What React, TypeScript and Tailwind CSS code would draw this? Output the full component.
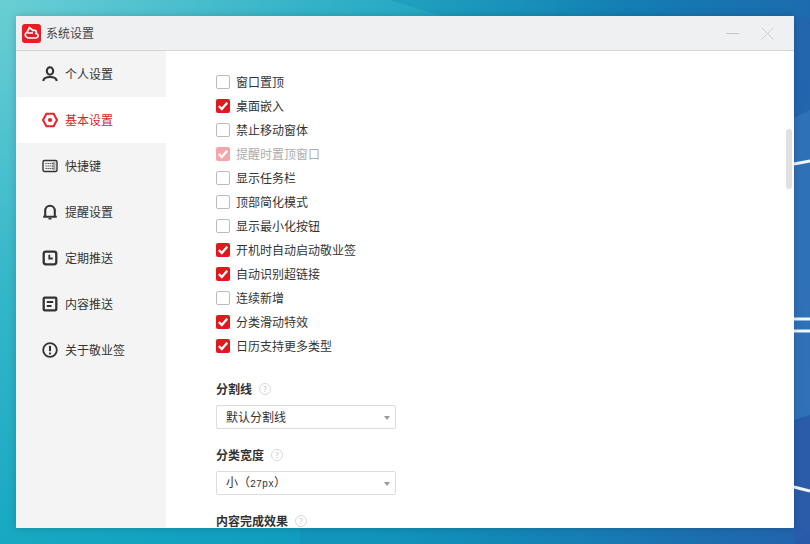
import React from "react";

const font = { fontFamily: '"Noto Sans CJK SC", "Liberation Sans", sans-serif' };

const checks: [string, "off" | "on" | "dim"][] = [
  ["窗口置顶", "off"],
  ["桌面嵌入", "on"],
  ["禁止移动窗体", "off"],
  ["提醒时置顶窗口", "dim"],
  ["显示任务栏", "off"],
  ["顶部简化模式", "off"],
  ["显示最小化按钮", "off"],
  ["开机时自动启动敬业签", "on"],
  ["自动识别超链接", "on"],
  ["连续新增", "off"],
  ["分类滑动特效", "on"],
  ["日历支持更多类型", "on"],
];

function Tick() {
  return (
    <svg width="14" height="14" viewBox="0 0 14 14" fill="none">
      <path d="M2.8 7 L5.8 10 L11.2 3.8" stroke="#fff" strokeWidth="2.4" />
    </svg>
  );
}

function Check({ label, state }: { label: string; state: "off" | "on" | "dim" }) {
  const box =
    state === "on"
      ? "bg-[#e8141c]"
      : state === "dim"
        ? "bg-[#f6a6aa]"
        : "border border-[#bcbcbc] bg-white";
  return (
    <div className="flex h-6 items-center gap-[6px]">
      <span className={`flex h-[14px] w-[14px] items-center justify-center rounded-[2px] ${box}`}>
        {state !== "off" && <Tick />}
      </span>
      <span className={`text-xs ${state === "dim" ? "text-[#adadad]" : "text-[#333]"}`}>{label}</span>
    </div>
  );
}

function Help() {
  return (
    <span className="flex h-3 w-3 items-center justify-center rounded-full border border-[#d8d8d8] text-[8px] leading-none text-[#c4c4c4]">
      ?
    </span>
  );
}

function Label({ text }: { text: string }) {
  return (
    <div className="flex h-4 items-center gap-[7px]">
      <span className="text-xs font-bold text-[#333]">{text}</span>
      <Help />
    </div>
  );
}

function Select({ children }: { children: React.ReactNode }) {
  return (
    <div className="mt-2 flex h-6 w-[180px] items-center justify-between rounded-[2px] border border-[#dcdcdc] bg-white pl-[9px] pr-[5px] text-xs text-[#333]">
      <span>{children}</span>
      <span className="mt-[1px] h-0 w-0 border-x-[3.5px] border-t-[4px] border-x-transparent border-t-[#999]" />
    </div>
  );
}

function Icon({ name, color }: { name: string; color: string }) {
  const s = { stroke: color, fill: "none", strokeWidth: 2.1 };
  return (
    <svg width="16" height="16" viewBox="0 0 16 16">
      {name === "user" && (
        <g {...s}>
          <ellipse cx="8" cy="5" rx="3.2" ry="3.7" />
          <path d="M1.2 15 C1.6 11.8 5 11 8 11 C11 11 14.4 11.8 14.8 15" />
        </g>
      )}
      {name === "hex" && (
        <g>
          <path d="M4.4 1.8 H11.6 L15 8 L11.6 14.2 H4.4 L1 8 Z" {...s} />
          <circle cx="8" cy="8" r="2.1" fill={color} />
        </g>
      )}
      {name === "kbd" && (
        <g>
          <rect x="1" y="2.5" width="14" height="11" rx="1.5" stroke={color} strokeWidth="1.4" fill="none" />
          <rect x="10.5" y="4" width="3" height="8" fill="#aaa" />
          <path d="M3.5 5.5 H12 M3.5 8 H12 M3.5 10.5 H12" stroke="#555" strokeWidth="1.2" strokeDasharray="1.4 0.6" />
        </g>
      )}
      {name === "bell" && (
        <g {...s}>
          <path d="M3.2 12.5 V7 C3.2 3.8 5.3 1.8 8 1.8 C10.7 1.8 12.8 3.8 12.8 7 V12.5" />
          <path d="M1.2 12.8 H14.8" />
          <path d="M6.5 14.7 H9.5" strokeWidth="1.6" />
        </g>
      )}
      {name === "clock" && (
        <g {...s} strokeWidth="2.3">
          <rect x="1.7" y="1.7" width="12.6" height="12.6" rx="2.2" />
          <path d="M7.3 4.8 V8.5 H10.8" strokeWidth="1.8" />
        </g>
      )}
      {name === "doc" && (
        <g {...s} strokeWidth="2.3">
          <rect x="1.7" y="1.7" width="12.6" height="12.6" rx="1" />
          <path d="M4.8 6 H11.2 M4.8 10 H9.5" strokeWidth="1.8" />
        </g>
      )}
      {name === "info" && (
        <g {...s}>
          <circle cx="8" cy="8" r="6.8" strokeWidth="1.8" />
          <path d="M8 3.8 V9.2" />
          <path d="M8 10.6 V12.4" />
        </g>
      )}
    </svg>
  );
}

const nav = [
  ["user", "个人设置"],
  ["hex", "基本设置"],
  ["kbd", "快捷键"],
  ["bell", "提醒设置"],
  ["clock", "定期推送"],
  ["doc", "内容推送"],
  ["info", "关于敬业签"],
];

export default function App() {
  return (
    <div
      style={font}
      className="relative h-[544px] w-[810px] overflow-hidden bg-[radial-gradient(ellipse_620px_560px_at_0px_0px,rgba(115,210,214,0.9)_0%,rgba(80,195,208,0.55)_50%,rgba(20,165,190,0)_100%),linear-gradient(92deg,#16a8c2_0%,#0f9abc_50%,#1583b6_72%,#1c70b0_87%,#2463ae_100%)] pb-4 pl-4 pr-4 pt-4"
    >
      <svg className="absolute inset-0" width="810" height="544" fill="none">
        <path d="M390 0 L445 17 L810 17 V0 Z" fill="#0a7fb0" opacity="0.25" />
        <path d="M794 118 L810 110 V530 L794 544 Z" fill="#3a7cbf" opacity="0.55" />
        <path d="M794 420 L810 415 V544 H794 Z" fill="#2a56a6" opacity="0.75" />
        <path d="M300 544 L810 544 V528 L794 528 L300 528 Z" fill="#1f5faa" opacity="0.12" />
        <path d="M794 164 L810 161" stroke="#f1f6fb" strokeWidth="3" />
        <path d="M794 319 H810" stroke="#f1f6fb" strokeWidth="3" />
        <path d="M794 331 H810" stroke="#f1f6fb" strokeWidth="3" />
        <path d="M794 487 L810 491" stroke="#f1f6fb" strokeWidth="3" />
      </svg>
      <div className="relative flex h-[512px] w-[778px] flex-col overflow-hidden rounded-[1px] bg-white shadow-[0_0_8px_rgba(0,0,0,0.18)]">
        <div className="flex h-[35px] shrink-0 items-center border-b border-[#d3d5d8] bg-[#eff0f2] pl-[6px]">
          <span className="flex h-[19px] w-[19px] items-center justify-center rounded-[3px] bg-[#ea1c24]">
            <svg width="16" height="14" viewBox="0 0 16 14" fill="none" stroke="#fff" strokeWidth="1.7">
              <path d="M3 11 C0.6 10.4 0.6 7 3 6.5 L5.5 1.5 L9.5 5" />
              <path d="M9 4.5 C12 3.5 13 6 12 7.5 C14.8 8 15 11.2 12 12 H4.5 C3.8 12 3.2 11.5 3 11" />
              <path d="M3.5 7 H9" />
            </svg>
          </span>
          <span className="ml-[5px] text-xs text-[#444]">系统设置</span>
          <div className="ml-auto flex items-center gap-[22px] pr-[20px]">
            <span className="h-px w-[13px] bg-[#c6c6c6]" />
            <svg width="13" height="13" viewBox="0 0 13 13" stroke="#cfcfcf" strokeWidth="1">
              <path d="M0.5 0.5 L12.5 12.5 M12.5 0.5 L0.5 12.5" />
            </svg>
          </div>
        </div>
        <div className="flex min-h-0 flex-1">
          <div className="w-[150px] shrink-0 bg-[#f4f4f5]">
            {nav.map(([icon, label], i) => (
              <div
                key={label}
                className={`flex h-[46px] items-center gap-[7px] pl-[26px] text-xs ${
                  i === 1 ? "bg-white text-[#d9252b]" : "text-[#333]"
                }`}
              >
                <Icon name={icon} color={i === 1 ? "#e8232b" : "#333"} />
                <span>{label}</span>
              </div>
            ))}
          </div>
          <div className="relative min-w-0 flex-1 overflow-hidden pl-[50px] pt-[19px]">
            {checks.map(([label, state]) => (
              <Check key={label} label={label} state={state} />
            ))}
            <div className="mt-[23px]">
              <Label text="分割线" />
              <Select>默认分割线</Select>
            </div>
            <div className="mt-[18px]">
              <Label text="分类宽度" />
              <Select>
                小（<span className="font-['Liberation_Mono'] text-[10px]">27px</span>）
              </Select>
            </div>
            <div className="mt-[18px]">
              <Label text="内容完成效果" />
            </div>
            <div className="absolute right-[2px] top-[78px] h-[60px] w-[6px] rounded-[3px] bg-[#e0e0e0]" />
          </div>
        </div>
      </div>
    </div>
  );
}
